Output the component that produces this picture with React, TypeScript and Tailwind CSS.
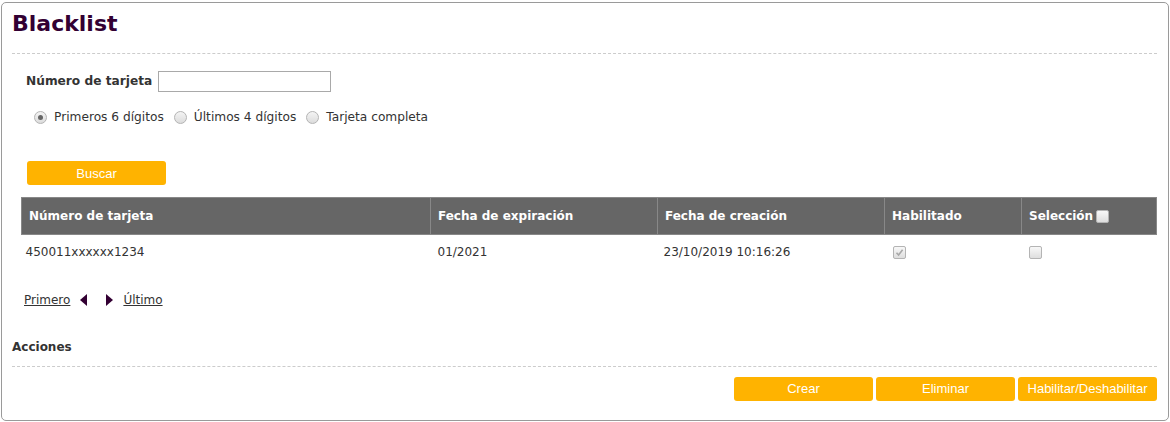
import { useState } from "react"

const font = { fontFamily: '"DejaVu Sans", Verdana, sans-serif' }

function YellowButton({ label, className }: { label: string; className?: string }) {
    return (
        <button
            className={"h-[24px] w-[139px] rounded-[3px] bg-[#ffb300] text-[13px] text-white " + (className ?? "")}
            style={{ fontFamily: '"Liberation Sans", Arial, sans-serif' }}
        >
            {label}
        </button>
    )
}

function Radio({ checked, label }: { checked?: boolean; label: string }) {
    return (
        <label className="flex items-center gap-[7px]">
            <span className="flex h-[13px] w-[13px] items-center justify-center rounded-full border border-[#b4b4b4] bg-gradient-to-b from-[#f4f4f4] to-[#dcdcdc]">
                {checked && <span className="h-[5px] w-[5px] rounded-full bg-[#666]" />}
            </span>
            <span>{label}</span>
        </label>
    )
}

function Check({ checked, disabled }: { checked?: boolean; disabled?: boolean }) {
    return (
        <span className="flex h-[13px] w-[13px] items-center justify-center rounded-[2px] border border-[#b4b4b4] bg-gradient-to-b from-[#f8f8f8] to-[#dedede]">
            {checked && (
                <svg width="9" height="9" viewBox="0 0 9 9">
                    <path d="M1.5 4.8 L3.6 7 L7.6 1.8" fill="none" stroke={disabled ? "#a8a8a8" : "#444"} strokeWidth="1.6" />
                </svg>
            )}
        </span>
    )
}

export default function App() {
    const [mode, setMode] = useState("primeros")
    const cols = [
        { name: "Número de tarjeta", w: "w-[409px]" },
        { name: "Fecha de expiración", w: "w-[227px]" },
        { name: "Fecha de creación", w: "w-[227px]" },
        { name: "Habilitado", w: "w-[137px]" },
    ]
    return (
        <div className="bg-white p-[1px] pt-[2px] text-[12px] text-[#333]" style={font}>
            <div className="h-[419px] rounded-[5px] border border-[#9a9a9a] pl-[10px] pr-[11px]">
                <h1 className="pt-[8px] text-[22px] leading-[26px] font-bold text-[#330033]">Blacklist</h1>
                <div className="mt-[16px] border-t border-dashed border-[#cccccc]" />

                <div className="pl-[14px]">
                    <div className="mt-[17px] flex items-center gap-[6px]">
                        <span className="text-[12.2px] font-bold">Número de tarjeta</span>
                        <input className="h-[21px] w-[173px] border border-[#a9a9a9] bg-white" />
                    </div>
                    <div className="mt-[16px] flex items-center gap-[10px] pl-[8px] text-[12.2px]" onClick={() => setMode(mode)}>
                        <Radio checked label="Primeros 6 dígitos" />
                        <Radio label="Últimos 4 dígitos" />
                        <Radio label="Tarjeta completa" />
                    </div>
                    <div className="mt-[35px] pl-[1px]">
                        <YellowButton label="Buscar" className="h-[24px]" />
                    </div>
                </div>

                <table className="mt-[12px] ml-[9px] w-[1136px] border-collapse">
                    <thead>
                        <tr className="h-[37px] bg-[#666666] text-left text-white">
                            {cols.map((c) => (
                                <th key={c.name} className={"border border-[#888] px-[7px] font-bold " + c.w}>
                                    {c.name}
                                </th>
                            ))}
                            <th className="border border-[#888] px-[7px] font-bold">
                                <span className="flex items-center gap-[3px]">
                                    Selección <Check />
                                </span>
                            </th>
                        </tr>
                    </thead>
                    <tbody>
                        <tr className="h-[34px]">
                            <td className="px-[4px]">450011xxxxxx1234</td>
                            <td className="px-[7px]">01/2021</td>
                            <td className="px-[6px]">23/10/2019 10:16:26</td>
                            <td className="px-[8px]">
                                <Check checked disabled />
                            </td>
                            <td className="px-[7px]">
                                <Check />
                            </td>
                        </tr>
                    </tbody>
                </table>

                <div className="mt-[22px] flex items-center pl-[12px]">
                    <a href="#" className="text-[#333] underline">Primero</a>
                    <span className="ml-[10px] mr-[19px] h-0 w-0 border-y-[6px] border-r-[7px] border-y-transparent border-r-[#330033]" />
                    <span className="mr-[10px] h-0 w-0 border-y-[6px] border-l-[7px] border-y-transparent border-l-[#330033]" />
                    <a href="#" className="text-[#333] underline">Último</a>
                </div>

                <h2 className="mt-[29px] font-bold">Acciones</h2>
                <div className="mt-[10px] border-t border-dashed border-[#cccccc]" />
                <div className="mt-[10px] flex justify-end gap-[3px]">
                    <YellowButton label="Crear" />
                    <YellowButton label="Eliminar" />
                    <YellowButton label="Habilitar/Deshabilitar" />
                </div>
            </div>
        </div>
    )
}
